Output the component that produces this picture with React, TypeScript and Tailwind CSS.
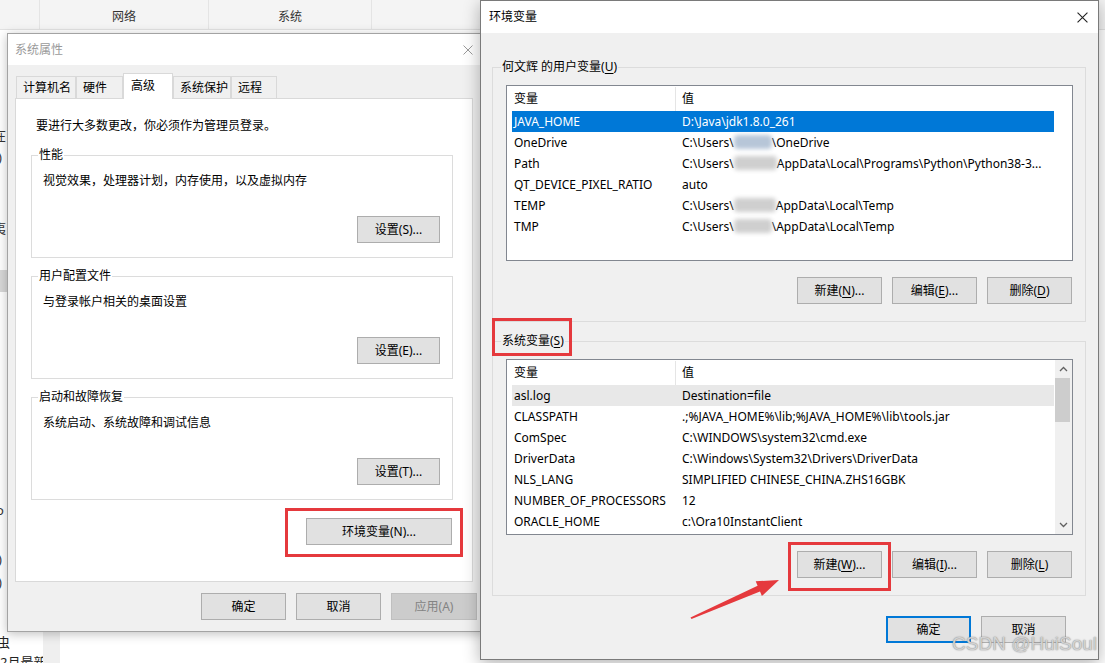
import React from 'react'

type Row = { name: string; value: React.ReactNode; tone?: 'selected' | 'soft' }

function Smudge({ w, tint }: { w: string; tint?: boolean }) {
  return (
    <span
      className={`inline-block h-[14px] translate-y-[2px] rounded-sm blur-[2px] ${w} ${tint ? 'bg-[#b7c6d8]' : 'bg-[#cfcfcf]'}`}
    />
  )
}

const userVars: Row[] = [
  { name: 'JAVA_HOME', value: 'D:\\Java\\jdk1.8.0_261', tone: 'selected' },
  { name: 'OneDrive', value: <>C:\Users\<Smudge w="w-[38px]" tint />\OneDrive</> },
  { name: 'Path', value: <>C:\Users\<Smudge w="w-[43px]" />AppData\Local\Programs\Python\Python38-3...</> },
  { name: 'QT_DEVICE_PIXEL_RATIO', value: 'auto' },
  { name: 'TEMP', value: <>C:\Users\<Smudge w="w-[42px]" />AppData\Local\Temp</> },
  { name: 'TMP', value: <>C:\Users\<Smudge w="w-[38px]" />\AppData\Local\Temp</> },
]

const sysVars: Row[] = [
  { name: 'asl.log', value: 'Destination=file', tone: 'soft' },
  { name: 'CLASSPATH', value: '.;%JAVA_HOME%\\lib;%JAVA_HOME%\\lib\\tools.jar' },
  { name: 'ComSpec', value: 'C:\\WINDOWS\\system32\\cmd.exe' },
  { name: 'DriverData', value: 'C:\\Windows\\System32\\Drivers\\DriverData' },
  { name: 'NLS_LANG', value: 'SIMPLIFIED CHINESE_CHINA.ZHS16GBK' },
  { name: 'NUMBER_OF_PROCESSORS', value: '12' },
  { name: 'ORACLE_HOME', value: 'c:\\Ora10InstantClient' },
  { name: 'OS', value: 'Windows_NT' },
]

function CloseX({ size, color }: { size: number; color: string }) {
  return (
    <svg width={size} height={size} viewBox="0 0 10 10" className="shrink-0">
      <path d="M0.5 0.5 L9.5 9.5 M9.5 0.5 L0.5 9.5" stroke={color} strokeWidth="1" fill="none" />
    </svg>
  )
}

function Btn({
  children,
  className = '',
  disabled = false,
  focused = false,
}: {
  children: React.ReactNode
  className?: string
  disabled?: boolean
  focused?: boolean
}) {
  const look = disabled
    ? 'border border-[#bfbfbf] bg-[#cccccc] text-[#838383]'
    : focused
      ? 'border-2 border-[#0078d7] bg-[#e1e1e1] text-black'
      : 'border border-[#adadad] bg-[#e1e1e1] text-black'
  return (
    <div className={`flex h-[27px] shrink-0 items-center justify-center text-[12px] leading-none ${look} ${className}`}>
      {children}
    </div>
  )
}

function U({ children }: { children: React.ReactNode }) {
  return <span className="underline underline-offset-2">{children}</span>
}

function Chevron({ up }: { up?: boolean }) {
  return (
    <svg width="9" height="6" viewBox="0 0 9 6">
      <path d={up ? 'M1 5 L4.5 1.5 L8 5' : 'M1 1 L4.5 4.5 L8 1'} stroke="#606060" strokeWidth="1.3" fill="none" />
    </svg>
  )
}

function VarList({ rows, scroll }: { rows: Row[]; scroll?: boolean }) {
  return (
    <div className="ml-[13px] flex h-[176px] w-[567px] border border-[#828790] bg-white">
      <div className="flex-1 overflow-hidden pt-px">
        <div className="ml-[5px] flex h-[24px] w-[542px] items-center leading-[24px]">
          <div className="w-[163px] pl-[2px]">变量</div>
          <div className="h-full w-px bg-[#e5e5e5]" />
          <div className="pl-[6px]">值</div>
        </div>
        {rows.map((r) => (
          <div
            key={r.name}
            className={`ml-[5px] flex h-[21px] w-[542px] items-center whitespace-nowrap leading-[21px] ${
              r.tone === 'selected' ? 'bg-[#0078d7] text-white' : r.tone === 'soft' ? 'bg-[#e8e8e8]' : ''
            }`}
          >
            <div className="w-[164px] pl-[2px]">{r.name}</div>
            <div className="pl-[6px]">{r.value}</div>
          </div>
        ))}
      </div>
      {scroll && (
        <div className="flex w-[17px] flex-col bg-[#f0f0f0]">
          <div className="flex h-[18px] items-center justify-center">
            <Chevron up />
          </div>
          <div className="h-[44px] w-[15px] bg-[#cdcdcd]" />
          <div className="flex-1" />
          <div className="flex h-[18px] items-center justify-center">
            <Chevron />
          </div>
        </div>
      )}
    </div>
  )
}

function Group({ title, desc, button, first }: { title: string; desc: string; button: string; first?: boolean }) {
  return (
    <fieldset className={`ml-[15px] w-[422px] border border-[#dcdcdc] pb-[14px] ${first ? 'mt-[13px]' : 'mt-[10px]'}`}>
      <legend className="ml-[6px] px-[1px] leading-[16px]">{title}</legend>
      <p className="ml-[11px] mt-[10px] leading-[16px]">{desc}</p>
      <div className="mt-[27px] flex justify-end pr-[12px]">
        <Btn className="w-[83px]">{button}</Btn>
      </div>
    </fieldset>
  )
}

function SystemProperties() {
  const tabs = [
    { label: '计算机名', w: 'w-[60px]' },
    { label: '硬件', w: 'w-[47px]' },
    { label: '高级', w: 'w-[50px]', active: true },
    { label: '系统保护', w: 'w-[58px]' },
    { label: '远程', w: 'w-[46px]' },
  ]
  return (
    <div className="absolute left-[7px] top-[33px] flex h-[599px] w-[480px] flex-col border border-[#a3a3a3] bg-[#f0f0f0] text-[12px] text-black shadow-[0_2px_10px_rgba(0,0,0,0.25)]">
      <div className="flex h-[31px] items-center justify-between bg-white pl-[7px] pr-[13px] text-[#9a9a9a]">
        <span>系统属性</span>
        <CloseX size={10} color="#9a9a9a" />
      </div>
      <div className="ml-[8px] mt-[8px] flex h-[25px] items-end">
        {tabs.map((t) =>
          t.active ? (
            <div
              key={t.label}
              className={`relative z-10 -mb-px flex h-[26px] items-start border border-b-0 border-[#d9d9d9] bg-white pl-[7px] pt-[4px] leading-[16px] ${t.w}`}
            >
              {t.label}
            </div>
          ) : (
            <div
              key={t.label}
              className={`flex h-[22px] items-center border border-b-0 border-[#d9d9d9] bg-[#f0f0f0] pl-[6px] leading-[16px] ${t.w}`}
            >
              {t.label}
            </div>
          ),
        )}
      </div>
      <div className="ml-[7px] flex h-[484px] w-[458px] flex-col border border-[#d9d9d9] bg-white">
        <p className="ml-[20px] mt-[19px] leading-[16px]">要进行大多数更改，你必须作为管理员登录。</p>
        <Group first title="性能" desc="视觉效果，处理器计划，内存使用，以及虚拟内存" button="设置(S)..." />
        <Group title="用户配置文件" desc="与登录帐户相关的桌面设置" button="设置(E)..." />
        <Group title="启动和故障恢复" desc="系统启动、系统故障和调试信息" button="设置(T)..." />
        <div className="mt-[18px] flex justify-end pr-[20px]">
          <Btn className="w-[146px]">环境变量(N)...</Btn>
        </div>
      </div>
      <div className="mt-[11px] flex justify-end gap-[10px] pr-[9px]">
        <Btn className="w-[85px]">确定</Btn>
        <Btn className="w-[85px]">取消</Btn>
        <Btn className="w-[86px]" disabled>
          应用(A)
        </Btn>
      </div>
    </div>
  )
}

function EnvironmentVariables() {
  return (
    <div className="absolute left-[480px] top-0 flex h-[660px] w-[619px] flex-col border border-[#7a7a7a] bg-[#f0f0f0] text-[12px] text-black shadow-[0_4px_16px_rgba(0,0,0,0.3)]">
      <div className="flex h-[32px] shrink-0 items-center justify-between bg-white pl-[8px] pr-[10px]">
        <span>环境变量</span>
        <CloseX size={11} color="#222" />
      </div>

      <fieldset className="ml-[11px] mt-[26px] w-[594px] border border-[#dcdcdc] pb-[17px]">
        <legend className="ml-[8px] px-[1px] leading-[16px]">
          何文辉 的用户变量(<U>U</U>)
        </legend>
        <div className="mt-[10px]">
          <VarList rows={userVars} />
        </div>
        <div className="mt-[16px] flex justify-end gap-[10px] pr-[13px]">
          <Btn className="w-[85px]">
            新建(<U>N</U>)...
          </Btn>
          <Btn className="w-[85px]">
            编辑(<U>E</U>)...
          </Btn>
          <Btn className="w-[85px]">
            删除(<U>D</U>)
          </Btn>
        </div>
      </fieldset>

      <fieldset className="ml-[11px] mt-[11px] w-[594px] border border-[#dcdcdc] pb-[17px]">
        <legend className="ml-[8px] px-[1px] leading-[16px]">
          系统变量(<U>S</U>)
        </legend>
        <div className="mt-[10px]">
          <VarList rows={sysVars} scroll />
        </div>
        <div className="mt-[16px] flex justify-end gap-[10px] pr-[13px]">
          <Btn className="w-[85px]">
            新建(<U>W</U>)...
          </Btn>
          <Btn className="w-[85px]">
            编辑(<U>I</U>)...
          </Btn>
          <Btn className="w-[85px]">
            删除(<U>L</U>)
          </Btn>
        </div>
      </fieldset>

      <div className="mt-[20px] flex justify-end gap-[10px] pr-[32px]">
        <Btn className="w-[85px]" focused>
          确定
        </Btn>
        <Btn className="w-[85px]">取消</Btn>
      </div>
    </div>
  )
}

function Desktop() {
  return (
    <div className="flex h-full flex-col">
      {/* window behind the dialogs */}
      <div className="flex h-[30px] shrink-0 border-b border-[#e2e2e2] bg-[#f4f4f4] text-[12px] text-[#333]">
        <div className="w-[40px] border-r border-[#e4e4e4]" />
        <div className="flex w-[169px] items-center justify-center border-r border-[#e4e4e4] pt-[4px]">网络</div>
        <div className="flex w-[163px] items-center justify-center border-r border-[#e4e4e4] pt-[4px]">系统</div>
        <div className="flex-1" />
      </div>
      <div className="flex h-[602px] shrink-0">
        <div className="flex w-[7px] flex-col overflow-hidden text-[13px] leading-[16px] text-[#333]">
          <span className="ml-[-7px] mt-[97px]">在</span>
          <span className="ml-[-2px] mt-[6px]">)</span>
          <span className="ml-[-7px] mt-[55px]">夷</span>
          <div className="mt-[34px] h-[22px] w-[7px] bg-[#d8d8d8]" />
          <span className="ml-[-4px] mt-[210px]">o</span>
          <span className="ml-[-2px] mt-[33px]">)</span>
          <span className="ml-[-2px] mt-[7px]">)</span>
        </div>
        <div className="flex-1" />
      </div>
      <div className="flex flex-1">
        <div className="flex w-[43px] flex-col text-[13px] leading-[20px] text-[#222]">
          <span className="ml-[-3px]">虫</span>
          <span className="whitespace-nowrap">2月最新</span>
        </div>
        <div className="w-[17px] bg-[#efefef]" />
        <div className="flex-1 bg-white" />
      </div>
    </div>
  )
}

export default function App() {
  return (
    <div className="relative h-[663px] w-[1105px] overflow-hidden bg-white font-['Noto_Sans','Noto_Sans_CJK_SC',sans-serif]">
      <Desktop />
      <SystemProperties />
      <EnvironmentVariables />

      {/* annotations */}
      <div className="absolute left-[285px] top-[508px] h-[49px] w-[178px] border-[3px] border-[#e5393d]" />
      <div className="absolute left-[492px] top-[318px] h-[38px] w-[80px] border-[3px] border-[#e5393d]" />
      <div className="absolute left-[788px] top-[542px] h-[49px] w-[103px] border-[3px] border-[#e5393d]" />
      <svg className="absolute left-[688px] top-[575px]" width="95" height="47" viewBox="0 0 95 47">
        <polygon points="2.5,42.5 69.6,10.8 67.7,6.2 91,5 73.9,21 72,16.4 3.5,44" fill="#e5393d" />
      </svg>
      <div className="absolute right-[8px] top-[632px] font-['Liberation_Sans',sans-serif] text-[19px] leading-[24px] text-[#d2d2d2] [text-shadow:0_0_1.5px_#6b6b6b]">
        CSDN @HuiSoul
      </div>
    </div>
  )
}
